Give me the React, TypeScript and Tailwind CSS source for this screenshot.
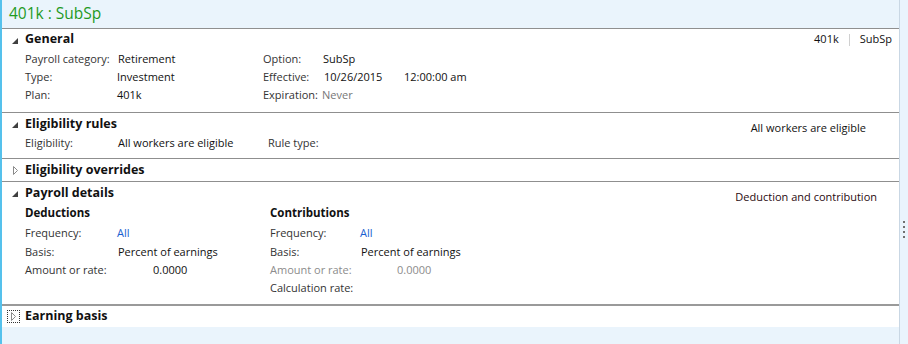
import React from 'react';

const font = { fontFamily: '"Open Sans", "Liberation Sans", sans-serif' };

const Expanded = () => (
    <svg width="6" height="6" viewBox="0 0 6 6" className="shrink-0">
        <path d="M6 0 L6 6 L0 6 Z" fill="#404040" />
    </svg>
);

const Collapsed = () => (
    <svg width="5" height="9" viewBox="0 0 5 9" className="shrink-0">
        <path d="M0.5 0.5 L4.5 4.5 L0.5 8.5 Z" fill="none" stroke="#8a8a8a" strokeWidth="1" />
    </svg>
);

interface SectionHeaderProps {
    title: string;
    expanded?: boolean;
    focused?: boolean;
    right?: React.ReactNode;
    className?: string;
}

const SectionHeader: React.FC<SectionHeaderProps> = ({ title, expanded = true, focused = false, right, className = '' }) => (
    <div className={`flex items-center ${className}`}>
        <div className="w-[23px] flex justify-center items-center pl-[2px]">
            {focused ? (
                <div className="w-[13px] h-[13px] border border-dotted border-[#333] flex items-center justify-center ml-[-3px]">
                    <Collapsed />
                </div>
            ) : expanded ? (
                <div className="ml-[1px] mt-[2px]"><Expanded /></div>
            ) : (
                <div className="ml-[1px]"><Collapsed /></div>
            )}
        </div>
        <span className="text-[12.5px] font-bold text-[#111]">{title}</span>
        <div className="ml-auto">{right}</div>
    </div>
);

interface FieldProps {
    label: string;
    value?: string;
    labelW: string;
    valueClass?: string;
    muted?: boolean;
    h?: string;
}

const Field: React.FC<FieldProps> = ({ label, value, labelW, valueClass = '', muted = false, h = 'h-[18px]' }) => (
    <div className={`flex items-center ${h} text-[11px]`}>
        <span className={`${labelW} shrink-0 ${muted ? 'text-[#8c8c8c]' : 'text-[#333]'}`}>{label}</span>
        {value !== undefined && <span className={valueClass}>{value}</span>}
    </div>
);

const Divider = ({ thick = false }: { thick?: boolean }) => (
    <div className={`${thick ? 'h-[2px] bg-[#9a9a9a]' : 'h-[1px] bg-[#8f8f8f]'}`} />
);

export default function App() {
    return (
        <div className="w-[908px] h-[344px] flex bg-[#eaf4fc] overflow-hidden" style={font}>
            <div className="w-[2px] bg-[#55c1ec] shrink-0" />
            <div className="w-[897px] shrink-0 flex flex-col">
                <div className="h-[28px] flex items-center pl-[7px] text-[15.5px] text-[#1f9a1f]">401k : SubSp</div>
                <div className="bg-white flex flex-col">
                    <Divider />
                    {/* General */}
                    <SectionHeader
                        title="General"
                        className="h-[21px]"
                        right={
                            <div className="flex items-center text-[11px] text-[#111] pr-[7px]">
                                <span>401k</span>
                                <span className="w-[1px] h-[12px] bg-[#d0d0d0] mx-[10px]" />
                                <span>SubSp</span>
                            </div>
                        }
                    />
                    <div className="flex pl-[23px] pb-[8px]">
                        <div className="w-[238px]">
                            <Field label="Payroll category:" labelW="w-[93px]" value="Retirement" valueClass="text-[#111]" />
                            <Field label="Type:" labelW="w-[92px]" value="Investment" valueClass="text-[#111]" />
                            <Field label="Plan:" labelW="w-[92px]" value="401k" valueClass="text-[#111]" />
                        </div>
                        <div>
                            <Field label="Option:" labelW="w-[60px]" value="SubSp" valueClass="text-[#111]" />
                            <div className="flex items-center h-[18px] text-[11px]">
                                <span className="w-[61px] text-[#333]">Effective:</span>
                                <span className="w-[80px] text-[#111]">10/26/2015</span>
                                <span className="text-[#111]">12:00:00 am</span>
                            </div>
                            <Field label="Expiration:" labelW="w-[59px]" value="Never" valueClass="text-[#777]" />
                        </div>
                    </div>
                    <Divider />
                    {/* Eligibility rules */}
                    <SectionHeader
                        title="Eligibility rules"
                        className="h-[21px] pt-[1px]"
                        right={<span className="text-[11px] text-[#111] pr-[33px] relative top-[2px]">All workers are eligible</span>}
                    />
                    <div className="flex pl-[23px] pb-[6px]">
                        <Field label="Eligibility:" labelW="w-[93px]" value="All workers are eligible" valueClass="text-[#111] w-[150px]" />
                        <Field label="Rule type:" labelW="w-[60px]" />
                    </div>
                    <Divider />
                    {/* Eligibility overrides */}
                    <SectionHeader title="Eligibility overrides" expanded={false} className="h-[22px]" />
                    <Divider />
                    {/* Payroll details */}
                    <SectionHeader
                        title="Payroll details"
                        className="h-[21px] pt-[1px]"
                        right={<span className="text-[11px] text-[#2a0a10] pr-[22px] relative top-[2px]">Deduction and contribution</span>}
                    />
                    <div className="flex pl-[23px] pb-[7px]">
                        <div className="w-[245px]">
                            <div className="h-[20px] flex items-center text-[11.5px] font-bold text-[#111]">Deductions</div>
                            <Field label="Frequency:" labelW="w-[92px]" value="All" valueClass="text-[#1a5fd0]" h="h-[20px]" />
                            <Field label="Basis:" labelW="w-[93px]" value="Percent of earnings" valueClass="text-[#111]" h="h-[19px]" />
                            <Field label="Amount or rate:" labelW="w-[128px]" value="0.0000" valueClass="text-[#111]" h="h-[17px]" />
                            <div className="h-[18px]" />
                        </div>
                        <div>
                            <div className="h-[20px] flex items-center text-[11.5px] font-bold text-[#111]">Contributions</div>
                            <Field label="Frequency:" labelW="w-[90px]" value="All" valueClass="text-[#1a5fd0]" h="h-[20px]" />
                            <Field label="Basis:" labelW="w-[91px]" value="Percent of earnings" valueClass="text-[#111]" h="h-[19px]" />
                            <Field label="Amount or rate:" labelW="w-[127px]" value="0.0000" valueClass="text-[#8c8c8c]" muted h="h-[17px]" />
                            <Field label="Calculation rate:" labelW="w-[100px]" />
                        </div>
                    </div>
                    <Divider thick />
                    {/* Earning basis */}
                    <SectionHeader title="Earning basis" expanded={false} focused className="h-[21px]" />
                </div>
            </div>
            <div className="flex-1 border-l border-[#c9d7e4] flex flex-col items-center justify-center pt-[115px] gap-[3px]">
                <span className="w-[2px] h-[2px] bg-[#707070]" />
                <span className="w-[2px] h-[2px] bg-[#707070]" />
                <span className="w-[2px] h-[2px] bg-[#707070]" />
                <span className="w-[2px] h-[2px] bg-[#707070]" />
            </div>
        </div>
    );
}
